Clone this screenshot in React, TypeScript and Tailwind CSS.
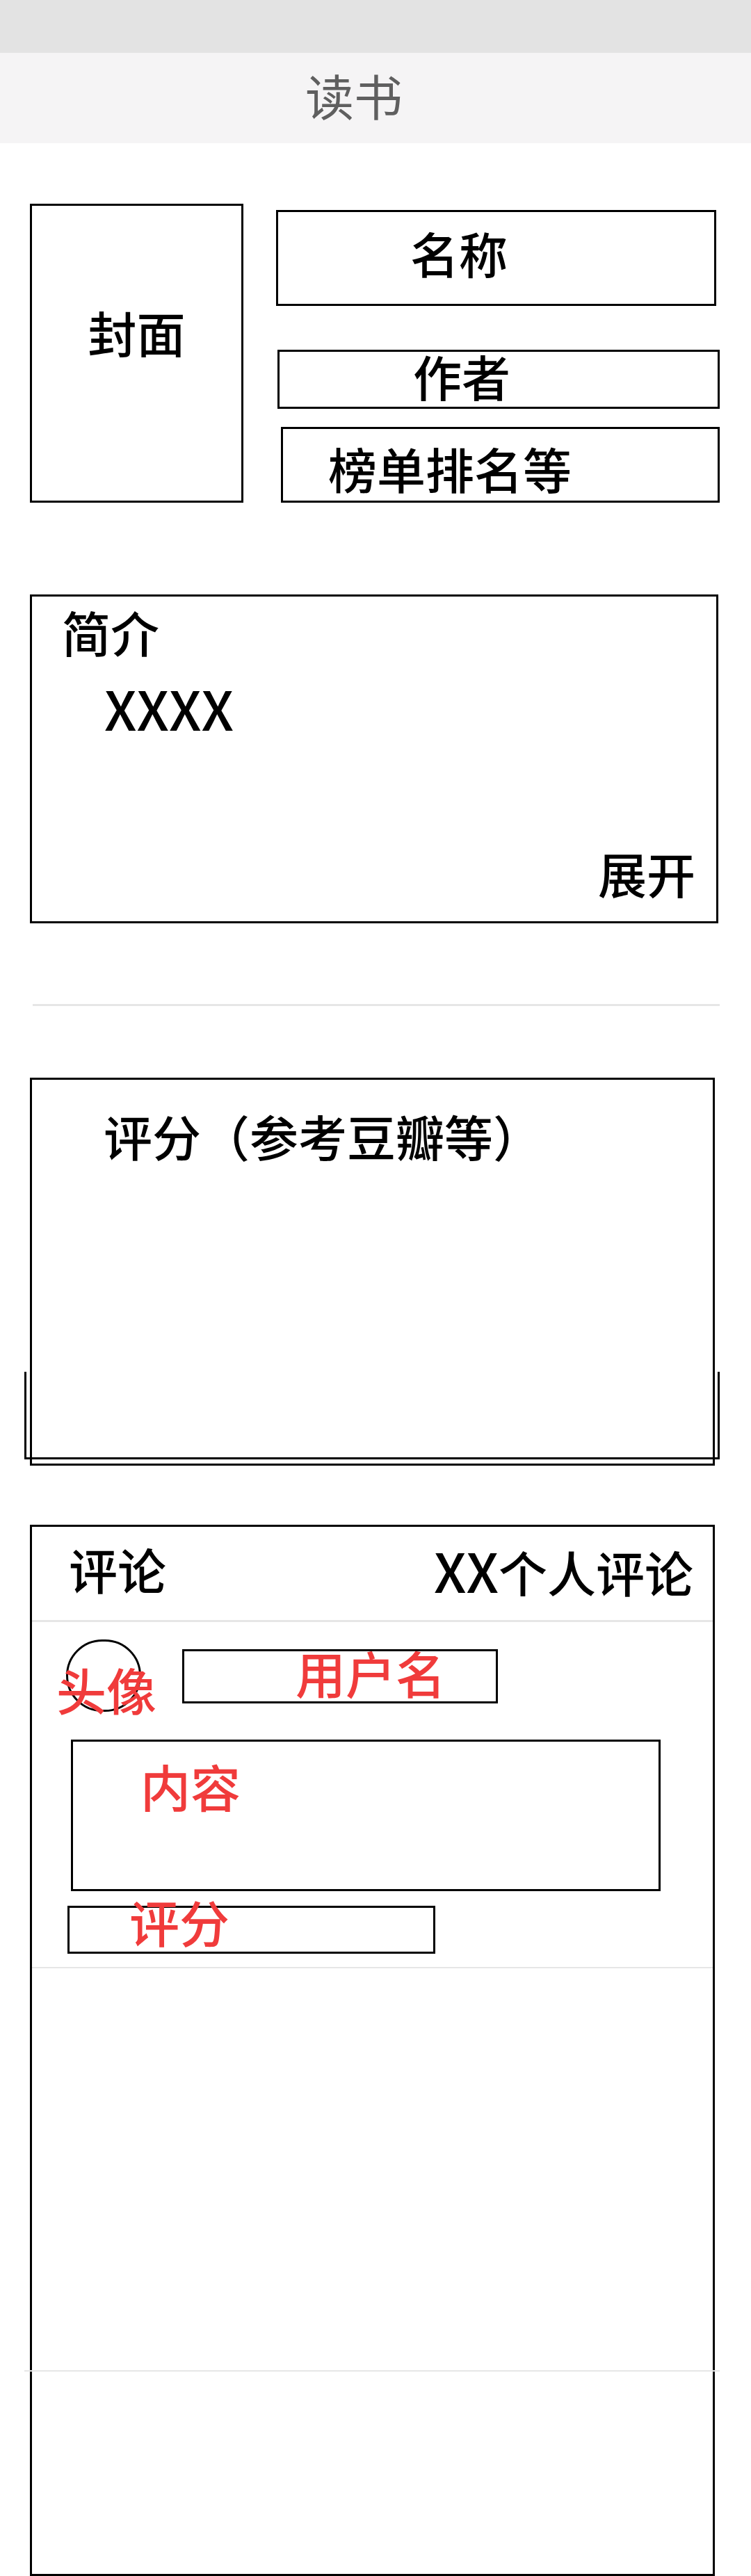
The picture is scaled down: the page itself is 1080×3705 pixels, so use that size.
export default function App() {
  return (
    <div
      className="w-[1080px] min-h-[3705px] bg-white text-black"
      style={{ fontFamily: '"Noto Sans CJK SC", "Noto Sans", sans-serif' }}
    >
      {/* status bar */}
      <div className="h-[76px] bg-[#e3e3e3]" />
      {/* title bar */}
      <header className="h-[130px] bg-[#f5f4f5] flex items-center justify-center pr-[62px] pb-[8px] text-[70px] leading-none text-[#5f5f5f]">
        读书
      </header>

      {/* book info */}
      <section className="flex pt-[87px] pl-[43px] font-medium">
        <div className="w-[307px] h-[430px] border-[3px] border-black flex items-center justify-center pb-[60px] text-[70px] leading-none">
          封面
        </div>
        <div className="ml-[47px] pt-[9px] flex flex-col">
          <div className="w-[633px] h-[138px] border-[3px] border-black flex items-center pl-[190px] pb-[14px] text-[70px] leading-none">
            名称
          </div>
          <div className="mt-[63px] ml-[2px] w-[636px] h-[85px] border-[3px] border-black flex items-center pl-[192px] pb-[10px] text-[70px] leading-none">
            作者
          </div>
          <div className="mt-[26px] ml-[7px] w-[631px] h-[109px] border-[3px] border-black flex items-center pl-[65px] pt-[10px] text-[70px] leading-none">
            榜单排名等
          </div>
        </div>
      </section>

      {/* intro */}
      <section className="ml-[43px] mt-[132px] w-[990px] h-[473px] border-[3px] border-black flex flex-col pl-[43px] pr-[30px] pt-[16px] pb-[34px] text-[70px] leading-none font-medium">
        <div>简介</div>
        <div className="mt-[34px] ml-[61px] text-[78px]">XXXX</div>
        <div className="mt-auto self-end">展开</div>
      </section>

      <div className="ml-[47px] mt-[116px] w-[988px] h-[3px] bg-[#e6e6e6]" />

      {/* rating */}
      <section className="relative ml-[43px] mt-[103px] w-[985px] h-[558px]">
        <div className="absolute left-[-8px] right-[-7px] top-[423px] h-[126px] border-x-[3px] border-b-[3px] border-black" />
        <div className="relative h-full border-[3px] border-black pl-[103px] pt-[46px] text-[70px] leading-none font-medium">
          评分（参考豆瓣等）
        </div>
      </section>

      {/* comments */}
      <section className="ml-[43px] mt-[85px] w-[985px] h-[1512px] border-[3px] border-black flex flex-col">
        <div className="h-[134px] flex items-center justify-between pl-[53px] pr-[28px] pb-[12px] text-[70px] leading-none font-medium">
          <span>评论</span>
          <span>
            <span className="text-[78px]">XX</span>个人评论
          </span>
        </div>
        <div className="h-[3px] bg-[#e6e6e6]" />

        <div className="flex flex-col font-medium">
          <div className="flex items-start pt-[25px] pl-[49px]">
            <div className="relative w-[108px] h-[104px] rounded-full border-[3px] border-black">
              <span className="absolute left-[-17px] top-[32px] text-[72px] leading-none text-[#f03b3b] whitespace-nowrap">
                头像
              </span>
            </div>
            <div className="ml-[59px] mt-[14px] w-[454px] h-[78px] border-[3px] border-black flex items-center pl-[160px] pb-[12px] text-[72px] leading-none text-[#f03b3b]">
              用户名
            </div>
          </div>

          <div className="ml-[56px] mt-[40px] w-[848px] h-[218px] border-[3px] border-black pl-[97px] pt-[27px] text-[72px] leading-none text-[#f03b3b]">
            内容
          </div>

          <div className="ml-[51px] mt-[21px] w-[529px] h-[69px] border-[3px] border-black flex items-center pl-[86px] pb-[26px] text-[72px] leading-none text-[#f03b3b]">
            评分
          </div>

          <div className="mt-[19px] h-[2px] bg-[#e6e6e6]" />
          <div className="mt-[578px] -ml-[11px] w-[1000px] h-[2px] bg-[#e6e6e6]" />
        </div>
      </section>
    </div>
  );
}
